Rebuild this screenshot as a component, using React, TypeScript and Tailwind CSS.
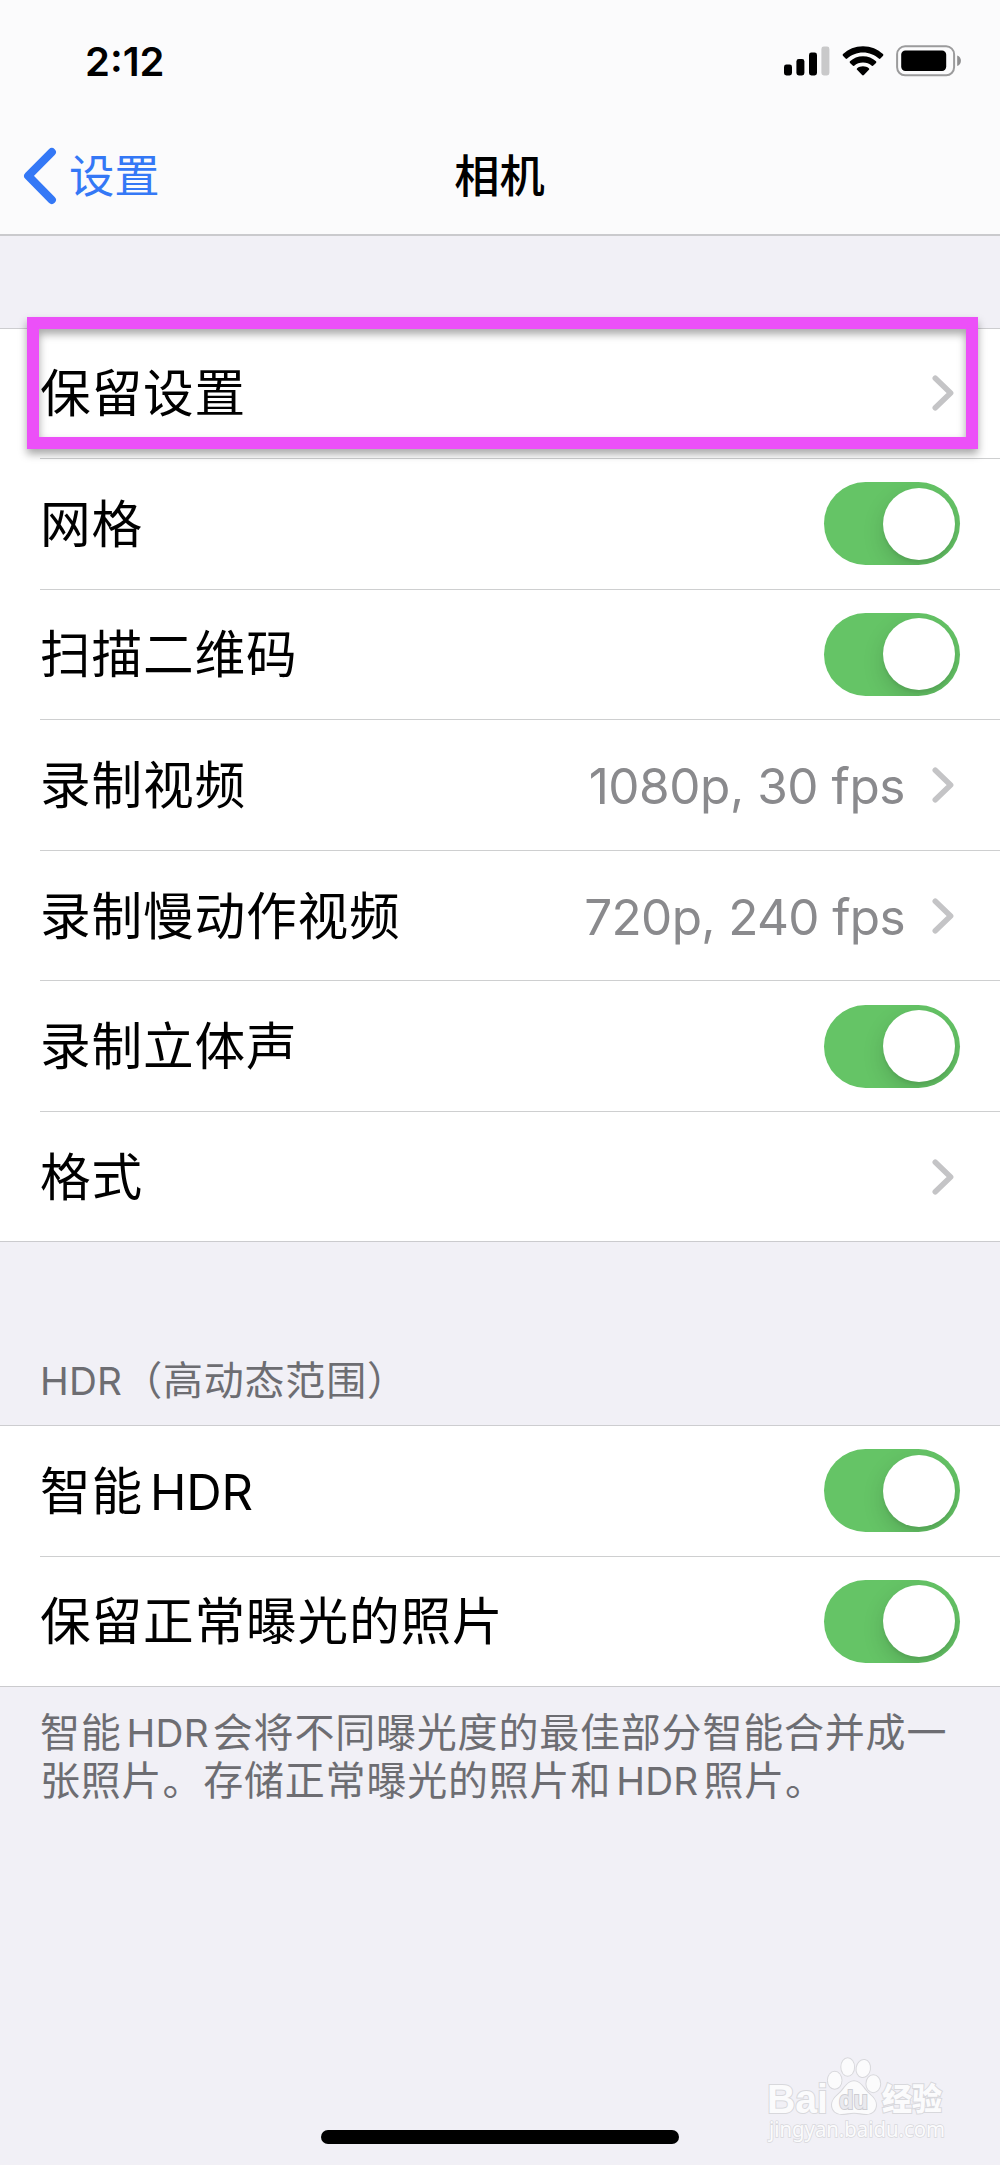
import type { ReactNode } from "react";

function SignalIcon() {
  return (
    <svg width="46" height="30" viewBox="0 0 46 30">
      <rect x="0" y="18.5" width="8" height="11" rx="2.4" />
      <rect x="12.4" y="13" width="8" height="16.5" rx="2.4" />
      <rect x="25" y="6.5" width="8" height="23" rx="2.4" />
      <rect x="37.4" y="0.5" width="8" height="29" rx="2.4" fill="#c9c9ca" />
    </svg>
  );
}

function WifiIcon() {
  return (
    <svg width="42" height="30" viewBox="0 0 42 30">
      <path d="M21 0.2C13.2 0.2 6.2 3.2 1 8.1c-.5.5-.5 1.1-.1 1.6l2.7 2.8c.5.5 1.1.5 1.6 0C9.300 8.700 14.900 6.400 21 6.400s11.700 2.300 15.800 6.100c.5.5 1.100.5 1.600 0l2.700-2.800c.4-.5.4-1.100-.1-1.600C35.800 3.200 28.800.2 21 .2Z" />
      <path d="M21 10.300c-5 0-9.600 1.900-13 5-.5.5-.5 1.100 0 1.600l2.700 2.700c.5.500 1 .5 1.500.1 2.400-2 5.500-3.200 8.800-3.200s6.400 1.200 8.800 3.200c.5.400 1 .4 1.500-.1l2.700-2.700c.5-.5.5-1.100 0-1.600-3.400-3.100-8-5-13-5Z" />
      <path d="M21 20.300c-2.200 0-4.200.7-5.800 1.900-.6.500-.6 1.100-.1 1.600l5 5.300c.6.600 1.200.6 1.800 0l5-5.300c.5-.5.5-1.100-.1-1.600-1.600-1.200-3.600-1.900-5.800-1.900Z" />
    </svg>
  );
}

function BatteryIcon() {
  return (
    <svg width="66" height="32" viewBox="0 0 66 32">
      <rect x="1.100" y="1.300" width="57" height="29" rx="8" fill="none" stroke="#9b9b9c" strokeWidth="2" />
      <rect x="5.200" y="5.500" width="45" height="20.500" rx="4.200" />
      <path d="M61.200 10.600c2.400.7 3.700 2.700 3.700 5.200s-1.300 4.500-3.700 5.200Z" fill="#8f8f90" />
    </svg>
  );
}

function Chevron() {
  return (
    <svg width="24" height="38" viewBox="0 0 24 38" fill="none" className="shrink-0">
      <path d="M4.300 4.200 19.600 19 4.300 33.800" stroke="#c4c4c6" strokeWidth="5.600" strokeLinecap="round" strokeLinejoin="round" />
    </svg>
  );
}

function Switch() {
  return (
    <div className="flex h-[83px] w-[136px] shrink-0 items-center justify-end overflow-hidden rounded-full bg-[#65c466] pr-[5px]">
      <div className="size-[72px] rounded-full bg-white shadow-[0_8px_21px_rgba(0,0,0,0.15),0_3px_3px_rgba(0,0,0,0.06)]" />
    </div>
  );
}

type RowProps = { label: ReactNode; value?: string; spacing?: string; toggle?: boolean; last?: boolean };

function Row({ label, value, spacing, toggle, last }: RowProps) {
  return (
    <div className={last ? "h-[130.57px]" : "h-[130.57px] pl-10"}>
      <div
        className={
          last
            ? "flex h-full items-center justify-between border-b border-[#cbcbce] pr-10 pl-10"
            : "flex h-full items-center justify-between border-b border-[#cecfd0] pr-10"
        }
      >
        <span className="mt-[2px] h-[60px] text-[50.67px] leading-[60px] tracking-[0.85px] whitespace-nowrap text-black">{label}</span>
        {toggle ? (
          <Switch />
        ) : (
          <div className="flex items-center gap-[26px] pr-[5px]">
            {value && (
              <span className={`mt-[2px] h-[60px] text-[49.500px] leading-[60px] whitespace-nowrap text-[#8a8a8d] ${spacing}`}>{value}</span>
            )}
            <Chevron />
          </div>
        )}
      </div>
    </div>
  );
}

function Watermark() {
  return (
    <svg
      className="absolute top-[2050px] left-[760px] overflow-visible"
      width="200"
      height="100"
      viewBox="0 0 200 100"
      fill="#fbfbfc"
      stroke="#d8d8dc"
      strokeWidth="2"
      style={{ paintOrder: "stroke" }}
    >
      <text x="7" y="62.700" fontFamily="Liberation Sans" fontWeight="700" fontSize="40" textLength="61" lengthAdjust="spacingAndGlyphs">Bai</text>
      <ellipse cx="74.700" cy="30.300" rx="6.800" ry="8.500" />
      <ellipse cx="87.700" cy="17" rx="6.400" ry="8.800" />
      <ellipse cx="103.300" cy="18.500" rx="6.700" ry="8.600" transform="rotate(10 103.300 18.500)" />
      <ellipse cx="113.300" cy="33.700" rx="6.900" ry="8.500" />
      <path d="M94 31.200c-6 0-8.500 5.500-12 9.500-4 4.500-10 7.500-10 14 0 5.500 4 9.300 9.500 9.300 4.500 0 8-1.200 12.500-1.200s8 1.200 12.500 1.200c5.500 0 9.500-3.800 9.500-9.300 0-6.500-6-9.500-10-14-3.500-4-6-9.500-12-9.500Z" />
      <text x="79" y="59" fontFamily="Liberation Sans" fontWeight="700" fontSize="26" fill="#e9e9ee" stroke="#cdcdd2" strokeWidth="2" textLength="29" lengthAdjust="spacingAndGlyphs">du</text>
      <text x="122" y="60" fontFamily="Noto Sans CJK SC" fontWeight="900" fontSize="31" textLength="60" lengthAdjust="spacingAndGlyphs">经验</text>
      <text x="9" y="86.500" fontFamily="Noto Sans" fontSize="22.500" strokeWidth="1.600" textLength="176" lengthAdjust="spacingAndGlyphs">jingyan.baidu.com</text>
    </svg>
  );
}

const latin = "text-[49px] tracking-[-0.2px] ml-[7px]";
const latinSmall = "text-[38.700px] tracking-[0.2px]";

export default function App() {
  return (
    <div className="relative flex h-[2165px] w-[1000px] flex-col overflow-hidden bg-[#f1f0f6] font-['Inter','Noto_Sans_CJK_SC',sans-serif] text-black">
      <header className="flex h-[236px] shrink-0 flex-col border-b-2 border-[#cacacd] bg-[#fbfbfc]">
        <div className="flex h-[122px] items-center justify-between pr-[38px] pl-[85px]">
          <span className="mt-[2px] text-[40px] leading-none font-semibold">2:12</span>
          <div className="flex items-center">
            <SignalIcon />
            <div className="ml-[12px]">
              <WifiIcon />
            </div>
            <div className="ml-[12px]">
              <BatteryIcon />
            </div>
          </div>
        </div>
        <div className="grid h-[110px] grid-cols-3 items-center">
          <div className="flex items-center text-[#3478f6]">
            <svg width="36" height="60" viewBox="0 0 36 60" fill="none" className="ml-[22px]">
              <path d="M29.800 5.100 6.200 28.900 29.800 52.800" stroke="currentColor" strokeWidth="8.200" strokeLinecap="round" strokeLinejoin="round" />
            </svg>
            <span className="ml-[11px] text-[45.330px] leading-[60px]">设置</span>
          </div>
          <h1 className="-ml-px text-center text-[45.330px] leading-[60px] font-medium">相机</h1>
          <div />
        </div>
      </header>

      <section className="mt-[91.500px] shrink-0 border-t border-[#cdcdd0] bg-white">
        <Row label="保留设置" />
        <Row label="网格" toggle />
        <Row label="扫描二维码" toggle />
        <Row label="录制视频" value="1080p, 30 fps" spacing="tracking-[-0.450px]" />
        <Row label="录制慢动作视频" value="720p, 240 fps" spacing="tracking-[-0.650px]" />
        <Row label="录制立体声" toggle />
        <Row label="格式" last />
      </section>

      <h2 className="mt-[114px] h-[50px] shrink-0 pl-10 text-[40px] leading-[50px] font-normal tracking-[0.8px] whitespace-nowrap text-[#6d6d72]">
        <span className={latinSmall}>HDR</span>（高动态范围）
      </h2>
      <section className="mt-[18.500px] shrink-0 border-t border-[#cdcdd0] bg-white">
        <Row label={<>智能<span className={latin}>HDR</span></>} toggle />
        <Row label="保留正常曝光的照片" toggle last />
      </section>
      <div className="mt-[22px] shrink-0 pl-10 text-[40px] tracking-[0.8px] whitespace-nowrap text-[#6d6d72]">
        <p className="h-[48.400px] leading-[48px]">
          智能<span className={`${latinSmall} mr-[4px] ml-[5px]`}>HDR</span>会将不同曝光度的最佳部分智能合并成一
        </p>
        <p className="h-[48.400px] leading-[48px]">
          张照片。存储正常曝光的照片和<span className={`${latinSmall} mr-[5px] ml-[5px]`}>HDR</span>照片。
        </p>
      </div>

      <div className="mt-auto mb-[21px] h-[14px] w-[358px] shrink-0 self-center rounded-full bg-black" />

      <div className="absolute top-[317px] left-[27px] h-[132px] w-[951px] border-[12px] border-[#ec50f8] drop-shadow-[0_5px_4px_rgba(0,0,0,0.35)]" />
      <Watermark />
    </div>
  );
}
